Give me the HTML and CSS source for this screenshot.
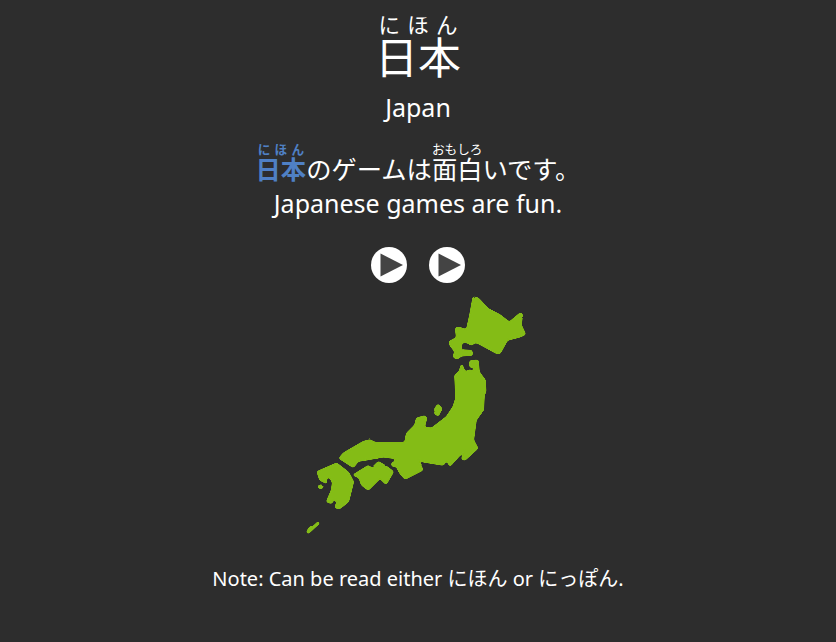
FILE: index.html
```html
<!DOCTYPE html>
<html lang="ja">
<head>
    <meta charset="UTF-8">
    <title>日本</title>
    <link rel="stylesheet" href="styles.css">
</head>
<body>
    <div class="card">
        <div class="word"><ruby>日本<rt>にほん</rt></ruby></div>
        <div class="meaning">Japan</div>

        <div class="sentence"><ruby class="target">日本<rt>にほん</rt></ruby>のゲームは<ruby>面白<rt>おもしろ</rt></ruby>いです。</div>
        <div class="translation">Japanese games are fun.</div>

        <div class="audio">
            <svg class="play" viewBox="0 0 36 36"><circle cx="18" cy="18" r="18" fill="#fff"/><path d="M9.5 6.5 L32 18 L9.5 29.5 Z" fill="#444"/></svg>
            <svg class="play" viewBox="0 0 36 36"><circle cx="18" cy="18" r="18" fill="#fff"/><path d="M9.5 6.5 L32 18 L9.5 29.5 Z" fill="#444"/></svg>
        </div>

        <svg class="map" viewBox="300 292 232 248">
            <filter id="soft" x="-5%" y="-5%" width="110%" height="110%">
                <feTurbulence type="fractalNoise" baseFrequency="0.25" numOctaves="2" seed="3" result="noise"/>
                <feGaussianBlur in="SourceGraphic" stdDeviation="1.2" result="blur"/>
                <feColorMatrix in="blur" type="matrix" values="1 0 0 0 0  0 1 0 0 0  0 0 1 0 0  0 0 0 7 -2.2" result="round"/>
                <feDisplacementMap in="round" in2="noise" scale="1.6" xChannelSelector="R" yChannelSelector="G"/>
            </filter>
            <g filter="url(#soft)" fill="#84bc14" stroke="#84bc14" stroke-width="1" stroke-linejoin="round">
                <!-- hokkaido -->
                <path d="M473.3 297 478.3 298.3 488.3 309 500 315 509.3 322.3 520 313.3 522.3 314.3 521 325 525.3 334.3 520 336.7 507.3 340 500 353.3 496.7 353.3 478.3 343.3 475 342.3 471.7 345 468.3 343.3 466.7 342.3 461.7 342.3 460.7 350 471.7 350.7 472.3 355 461.7 355.7 456.7 359 453.3 356.7 455 351.7 450 345 449.3 341.7 456.7 337.7 455.7 328.3 458.3 327.3 466.7 330 470 315Z"/>
                <!-- honshu -->
                <path d="M461.7 364.3 465 372.3 470 370 473 372 475 367 470 367 470 361 478 360.3 479 372 485 380 485.7 391.7 484 395 483.3 410 476 420 473.3 440 477.7 448.3 465 460 461.7 459 465.7 450 460 455 450 466 446.7 460 443.3 465 423.3 461.7 418.3 460 422.7 470 405 479 400 473.3 396.7 466.7 395 458.3 383.3 456.7 365 460 358.3 461 353.3 467.3 339.3 458.3 343.3 453.3 363.3 441.7 370 440 375 442.7 405 442.7 406.7 433.3 415 425 416.7 418.3 425 416 426.5 418 424 427.7 431.7 428.3 446.7 416.7 453.3 406.7 456 398.3 455 375 459.3 371.7Z"/>
                <!-- sado -->
                <path d="M438 404.3 441.7 408.3 438.3 415.7 434.3 413.3 437.7 409 434 410Z"/>
                <!-- shikoku -->
                <path d="M353.3 475 368.3 465.7 371.7 468.3 378.3 461.7 386.7 466.7 393.3 471.7 386 484.3 380 478.3 368.3 490 361.7 485 359.3 477.7Z"/>
                <ellipse cx="394.3" cy="464.3" rx="2.6" ry="2.2"/>
                <!-- kyushu -->
                <path d="M317.3 471.7 336.7 463.3 348.3 472.3 353.3 481.7 350 495 348.3 501.7 340 508.3 335 507.7 337.3 501.7 333.3 499 331.7 503.3 326.7 501.7 331.7 490 332.7 482.3 329.3 476.7 326 478.3 326.7 483.3 320 480Z"/>
                <ellipse cx="320.7" cy="486.7" rx="2.5" ry="1.6"/>
                <path d="M318.3 521.7 319.3 523.3 308.3 533.3 306.7 532.3 310 526.7 312.3 527.3Z"/>
            </g>
        </svg>

        <div class="note">Note: Can be read either にほん or にっぽん.</div>
    </div>
</body>
</html>
```

FILE: styles.css
```css
html, body {
    height: 100%;
}
body {
    margin: 0;
    background-color: #2d2d2d;
    color: #fff;
    font-family: "Noto Sans", "Noto Sans CJK JP", sans-serif;
    text-align: center;
}
.card {
    padding-top: 14px;
}
.word {
    font-size: 43px;
    line-height: 50px;
    padding-top: 18px;
}
.meaning {
    font-size: 25px;
    line-height: 34px;
    margin-top: 7px;
}
.sentence {
    font-size: 25.3px;
    line-height: 36px;
    margin-top: 18px;
}
.target {
    color: #4f80c4;
    font-weight: bold;
}
.translation {
    font-size: 25px;
    line-height: 33px;
}
.audio {
    display: flex;
    justify-content: center;
    gap: 22px;
    margin-top: 27px;
}
.play {
    width: 36px;
    height: 36px;
}
.map {
    display: block;
    width: 232px;
    height: 248px;
    margin: 9px auto 0 300px;
}
.note {
    font-size: 20px;
    line-height: 27px;
    margin-top: 25px;
}
```
